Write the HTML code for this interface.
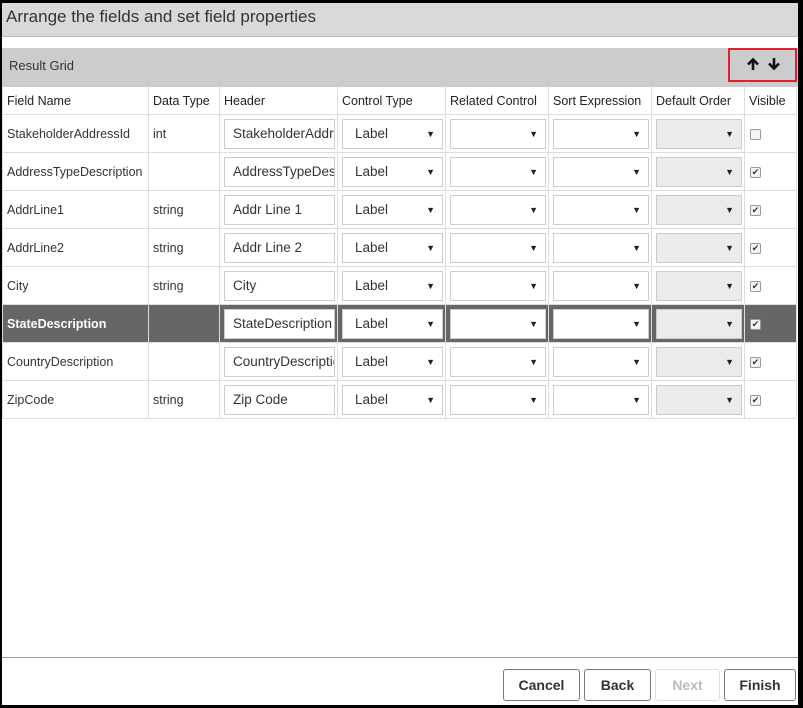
<!DOCTYPE html>
<html><head><style>
*{box-sizing:border-box}
body{margin:0;width:803px;height:708px;background:#000;font-family:"Liberation Sans",sans-serif;position:relative;overflow:hidden}
.frame{position:absolute;left:2px;top:3px;width:796px;height:702px;background:#fff}
.title{position:absolute;left:0;top:0;width:796px;height:34px;background:#d9d9d9;border-bottom:1px solid #bbb;font-size:17px;color:#333;padding:4px 0 0 4px}
.rg{position:absolute;left:0;top:45px;width:796px;height:39px;background:#cccccc;font-size:13px;color:#333;padding:10px 0 0 7px}
.red{position:absolute;left:726px;top:45px;width:69px;height:34px;border:2px solid #e0202a}
.cell{position:absolute;border-right:1px solid #ddd;border-bottom:1px solid #ddd;font-size:12.5px;color:#333;padding-left:4px;display:flex;align-items:center;white-space:nowrap;overflow:hidden}
.hd{color:#222}
.inp{position:absolute;border:1px solid #ccc;background:#fff;font-size:13.5px;color:#333;padding-left:8px;line-height:28px;overflow:hidden;white-space:nowrap}
.sel{position:absolute;border:1px solid #ccc;background:#fff;font-size:13.5px;color:#333;padding-left:12px;line-height:28px}
.sel:after{content:"▼";position:absolute;right:7px;top:0;font-size:9px;color:#222}
.dis{background:#ebebeb}
.cb{position:absolute;width:11px;height:11px;border:1px solid #999;border-radius:2px;background:#f4f4f4;font-size:9px;line-height:9px;text-align:center;color:#333}
.line{position:absolute;left:0;top:654px;width:796px;height:1px;background:#999}
.btn{position:absolute;top:666px;height:32px;border:1px solid #777;border-radius:3px;background:#fff;font-size:14px;font-weight:bold;color:#333;text-align:center;line-height:30px}
</style></head><body>
<div class="frame">
<div class="title">Arrange the fields and set field properties</div>
<div class="rg">Result Grid</div>
<div class="red"><svg width="65" height="30" viewBox="0 0 65 30" style="position:absolute;left:0;top:0">
<path d="M23 20V10M18 14.5L23 9.5L28 14.5" stroke="#111" stroke-width="2.6" fill="none"/>
<path d="M44 8V18M39 13.5L44 18.5L49 13.5" stroke="#111" stroke-width="2.6" fill="none"/>
</svg></div>
<div id="t"></div>
<div class="line"></div>
<div class="btn" style="left:501px;width:77px">Cancel</div>
<div class="btn" style="left:582px;width:67px">Back</div>
<div class="btn" style="left:653px;width:65px;color:#bbb;border-color:#ddd">Next</div>
<div class="btn" style="left:722px;width:72px">Finish</div>
</div>
<script>
var cols=[1,147,218,336,444,547,650,743,795];
var heads=["Field Name","Data Type","Header","Control Type","Related Control","Sort Expression","Default Order","Visible"];
var rows=[["StakeholderAddressId","int","StakeholderAddressId",0],["AddressTypeDescription","","AddressTypeDescription",1],["AddrLine1","string","Addr Line 1",1],["AddrLine2","string","Addr Line 2",1],["City","string","City",1],["StateDescription","","StateDescription",1],["CountryDescription","","CountryDescription",1],["ZipCode","string","Zip Code",1]];
var h="";
var y0=84;
for(var c=0;c<8;c++){h+='<div class="cell hd" style="left:'+(c==0?0:cols[c])+'px;top:'+y0+'px;width:'+(cols[c+1]-(c==0?0:cols[c]))+'px;height:28px;'+(c==0?'border-left:1px solid #ddd;':'')+'">'+heads[c]+'</div>';}
for(var r=0;r<8;r++){var y=112+r*38;var sel=r==5;var R=rows[r];
for(var c=0;c<8;c++){var bg=(sel&&c<2)?'background:#666;color:#fff;font-weight:bold;':(sel?'background:#666;':'');
var txt=c==0?R[0]:(c==1?R[1]:'');
h+='<div class="cell" style="left:'+(c==0?0:cols[c])+'px;top:'+y+'px;width:'+(cols[c+1]-(c==0?0:cols[c]))+'px;height:38px;'+(c==0?'border-left:1px solid #ddd;':'')+bg+'">'+txt+'</div>';}
h+='<div class="inp" style="left:222px;top:'+(y+4)+'px;width:111px;height:30px">'+R[2]+'</div>';
h+='<div class="sel" style="left:340px;top:'+(y+4)+'px;width:101px;height:30px">Label</div>';
h+='<div class="sel" style="left:448px;top:'+(y+4)+'px;width:96px;height:30px"></div>';
h+='<div class="sel" style="left:551px;top:'+(y+4)+'px;width:96px;height:30px"></div>';
h+='<div class="sel dis" style="left:654px;top:'+(y+4)+'px;width:86px;height:30px"></div>';
h+='<div class="cb" style="left:748px;top:'+(y+14)+'px">'+(R[3]?'✔':'')+'</div>';}
document.getElementById('t').innerHTML=h;
</script>
</body></html>
